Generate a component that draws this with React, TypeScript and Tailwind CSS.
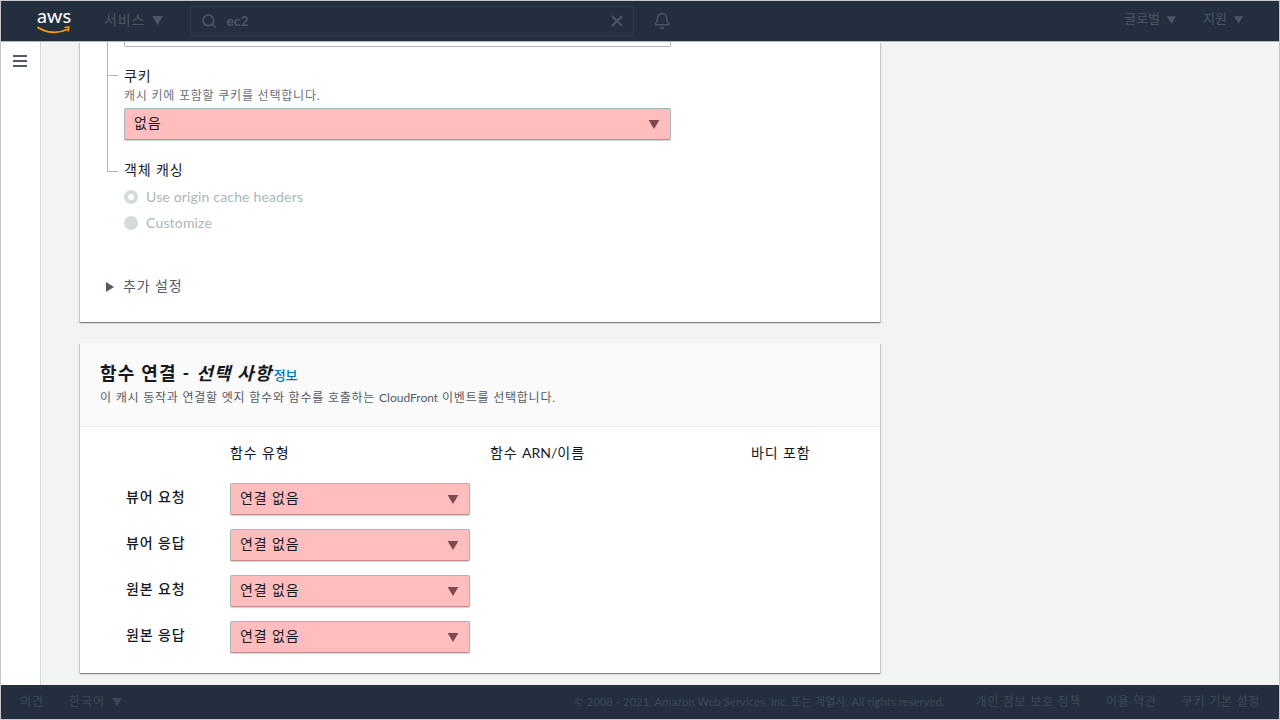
import { Bell, Search, X } from "lucide-react";

const font = "font-['Lato','Noto_Sans_CJK_KR',sans-serif]";
const ko = "tracking-[0.065em]";
const cardShadow =
  "shadow-[0_1px_1px_0_rgba(0,28,36,0.3),1px_1px_1px_0_rgba(0,28,36,0.15),-1px_1px_1px_0_rgba(0,28,36,0.15)]";

function Caret({ className }: { className: string }) {
  return (
    <svg viewBox="0 0 12 10" className={className} fill="currentColor">
      <path d="M0 0h12L6 10z" />
    </svg>
  );
}

function Select({ label, wide }: { label: string; wide?: boolean }) {
  return (
    <div
      className={`flex h-[32px] items-center justify-between rounded-[2px] border border-[#aab7b8] border-b-[#c98a8a] bg-[#ffbdbd] pl-[9px] pr-[10px] text-[14px] text-[#16191f] shadow-[0_1px_1px_rgba(0,28,36,0.2)] ${
        wide ? "w-[547px]" : "w-[240px]"
      }`}
    >
      <span className={`mb-[4px] ${ko}`}>{label}</span>
      <Caret className="h-[9px] w-[12px] text-[#7d4a50]" />
    </div>
  );
}

function Radio({ label, checked }: { label: string; checked?: boolean }) {
  return (
    <div className="flex h-[26px] items-center gap-[8px] pl-[44px] text-[14px] tracking-[0.17px] text-[#aab7b8]">
      <span className="mt-px flex h-[14px] w-[14px] items-center justify-center rounded-full bg-[#d5dbdb]">
        {checked && <span className="h-[6px] w-[6px] rounded-full bg-white" />}
      </span>
      {label}
    </div>
  );
}

function Header() {
  return (
    <header className="flex h-[40px] shrink-0 items-center bg-[#232f3e] text-[14px] text-[#4b5766]">
      <div className="ml-[36px] flex w-[34px] flex-col items-center">
        <span className="h-[19px] text-[20px] leading-[17px] text-white">aws</span>
        <svg viewBox="0 0 34 9" className="h-[9px] w-[34px]" fill="none">
          <path d="M1 1.5C10 7.5 22 7.5 30 3.5" stroke="#f90" strokeWidth="1.8" strokeLinecap="round" />
          <path d="M27.5 1.5L32 1l-1 4.5" stroke="#f90" strokeWidth="1.4" />
        </svg>
      </div>
      <div className="ml-[33px] mb-[2px] flex items-center gap-[7px]">
        <span className={`mb-[2px] ${ko}`}>서비스</span>
        <Caret className="h-[9px] w-[11px] text-[#4b5766]" />
      </div>
      <div className="ml-[27px] flex h-[30px] w-[444px] items-center rounded-[2px] border border-[#2f3c4c] pl-[10px] pr-[7px]">
        <Search size={16} strokeWidth={2.5} />
        <span className="ml-[9px] mb-[2px] flex-1 font-bold">ec2</span>
        <X size={18} strokeWidth={2.5} />
      </div>
      <Bell size={18} strokeWidth={2} className="ml-[19px]" />
      <div className="ml-auto mb-[2px] flex items-center gap-[7px] text-[13px]">
        <span className="mb-[2px]">글로벌</span>
        <Caret className="h-[8px] w-[9px]" />
      </div>
      <div className="ml-[27px] mr-[36px] mb-[2px] flex items-center gap-[7px] text-[13px]">
        <span className="mb-[2px]">지원</span>
        <Caret className="h-[8px] w-[9px]" />
      </div>
    </header>
  );
}

function Footer() {
  return (
    <footer className="flex h-[34px] shrink-0 items-center bg-[#232f3e] pl-[19px] pr-[19px] text-[12px] text-[#3d4958]">
      <span className="tracking-[0.08em]">의견</span>
      <span className="ml-[25px] tracking-[0.08em]">한국어</span>
      <Caret className="ml-[7px] h-[8px] w-[10px]" />
      <span className="ml-auto text-[11px] tracking-[0.17px]">
        © 2008 - 2021, Amazon Web Services, Inc. 또는 계열사. All rights reserved.
      </span>
      <span className="ml-[31px] tracking-[0.06em]">개인 정보 보호 정책</span>
      <span className="ml-[25px] tracking-[0.06em]">이용 약관</span>
      <span className="ml-[25px] tracking-[0.06em]">쿠키 기본 설정</span>
    </footer>
  );
}

function FirstCard() {
  return (
    <section className={`w-[800px] bg-white pb-[24px] ${cardShadow}`}>
      <div className="ml-[27px] w-[11px] border-b border-l border-[#aab7b8]">
        <div className="h-[34px] border-b border-[#aab7b8]" />
        <div className="h-[95px]" />
      </div>
      <div className="-mt-[130px] pl-[44px]">
        <div className="h-[5px] w-[547px] rounded-b-[2px] border border-t-0 border-[#aab7b8]" />
        <div className={`mt-[19px] text-[14px] leading-[20px] text-[#16191f] ${ko}`}>쿠키</div>
        <div className={`mt-px text-[12px] leading-[17px] text-[#687078] ${ko}`}>캐시 키에 포함할 쿠키를 선택합니다.</div>
        <div className="mt-[4px]">
          <Select label="없음" wide />
        </div>
        <div className={`mt-[20px] text-[14px] leading-[20px] text-[#16191f] ${ko}`}>객체 캐싱</div>
      </div>
      <div className="mt-[3px]">
        <Radio label="Use origin cache headers" checked />
        <Radio label="Customize" />
      </div>
      <div className="mt-[41px] flex items-center pl-[26px] text-[14px] leading-[20px] text-[#545b64]">
        <svg viewBox="0 0 8 10" className="h-[10px] w-[8px]" fill="currentColor">
          <path d="M0 0l8 5-8 5z" />
        </svg>
        <span className={`mb-[2px] ml-[9px] ${ko}`}>추가 설정</span>
      </div>
    </section>
  );
}

const rows = ["뷰어 요청", "뷰어 응답", "원본 요청", "원본 응답"];

function SecondCard() {
  return (
    <section className={`mt-[21px] w-[800px] shrink-0 bg-white ${cardShadow}`}>
      <div className="h-[84px] border-b border-[#eaeded] bg-[#fafafa] px-[20px] pt-[18px]">
        <div className="flex items-baseline text-[18px] font-bold leading-[24px] text-[#16191f]">
          <span className="tracking-[0.07em]">
            함수 연결 - <em>선택 사항</em>
          </span>
          <span className="ml-[1px] text-[13px] font-medium text-[#0073bb]">정보</span>
        </div>
        <p className={`mt-[2px] text-[12px] leading-[17px] text-[#545b64] ${ko}`}>
          이 캐시 동작과 연결할 엣지 함수와 함수를 호출하는 <span className="tracking-normal">CloudFront</span> 이벤트를
          선택합니다.
        </p>
      </div>
      <div className="pb-[20px] pt-[16px]">
        <div className={`flex h-[20px] text-[14px] leading-[20px] text-[#16191f] ${ko}`}>
          <span className="ml-[150px] w-[260px]">함수 유형</span>
          <span className="w-[261px]">
            함수 <span className="tracking-normal">ARN/</span>이름
          </span>
          <span>바디 포함</span>
        </div>
        <div className="mt-[20px] flex flex-col gap-[14px]">
          {rows.map((row) => (
            <div key={row} className="flex h-[32px] items-start">
              <span className={`ml-[46px] w-[104px] text-[14px] font-medium leading-[28px] text-[#16191f] ${ko}`}>{row}</span>
              <Select label="연결 없음" />
            </div>
          ))}
        </div>
      </div>
    </section>
  );
}

export default function App() {
  return (
    <div className={`flex h-[720px] w-[1280px] flex-col overflow-hidden border border-[#c6c6c6] bg-[#f2f3f3] ${font}`}>
      <Header />
      <main className="flex min-h-0 flex-1 overflow-hidden border-t border-[#4b5766]/40">
        <aside className="w-[40px] shrink-0 border-r border-[#d5dbdb] bg-white pl-[12px] pt-[13px]">
          <div className="flex w-[14px] flex-col gap-[3px]">
            <span className="h-[2px] bg-[#545b64]" />
            <span className="h-[2px] bg-[#545b64]" />
            <span className="h-[2px] bg-[#545b64]" />
          </div>
        </aside>
        <div className="ml-[39px] flex flex-col">
          <FirstCard />
          <SecondCard />
        </div>
      </main>
      <Footer />
    </div>
  );
}
